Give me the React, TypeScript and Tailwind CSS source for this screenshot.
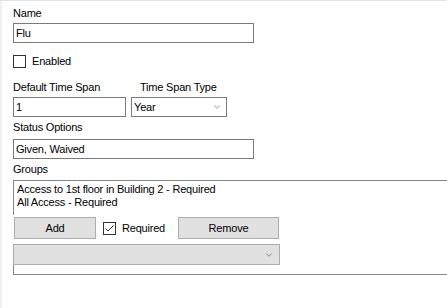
import { ChevronDown } from 'lucide-react'

const font = "font-['Liberation_Sans',Arial,sans-serif] text-[11px] leading-[13px] tracking-[-0.2px] text-black"

const groups = ['Access to 1st floor in Building 2 - Required', 'All Access - Required']

function CheckBox({ checked }: { checked?: boolean }) {
  return (
    <div className="w-[13px] h-[13px] border border-[#333333] bg-white flex items-center justify-center shrink-0">
      {checked && (
        <svg width="11" height="11" viewBox="0 0 11 11">
          <polyline points="1.5,5.5 4,8 9.5,2.5" fill="none" stroke="#333333" strokeWidth="1" />
        </svg>
      )}
    </div>
  )
}

function Chevron() {
  return <ChevronDown className="w-[10px] h-[10px] text-[#555555]" strokeWidth={1.5} />
}

export default function App() {
  return (
    <div className={`w-[447px] h-[308px] bg-white border-t border-[#e3e3e3] flex overflow-hidden ${font}`}>
      {/* left strip */}
      <div className="w-[2px] h-full bg-[#f0f0f0] shrink-0" />

      <div className="pl-[11px] flex flex-col">
        <div className="mt-[6px] h-[13px]">Name</div>
        <div className="mt-[3px] w-[241px] h-[20px] border border-[#7a7a7a] pl-[2px] flex items-center">Flu</div>

        <div className="mt-[12px] h-[13px] flex items-center gap-[6px]">
          <CheckBox />
          <span>Enabled</span>
        </div>

        <div className="mt-[13px] h-[13px] flex">
          <span className="w-[127px]">Default Time Span</span>
          <span>Time Span Type</span>
        </div>
        <div className="mt-[3px] flex gap-[5px]">
          <div className="w-[113px] h-[20px] border border-[#7a7a7a] pl-[2px] flex items-center">1</div>
          <div className="w-[96px] h-[20px] border border-[#7a7a7a] pl-[2px] pr-[4px] flex items-center justify-between">
            <span>Year</span>
            <Chevron />
          </div>
        </div>

        <div className="mt-[4px] h-[13px]">Status Options</div>
        <div className="mt-[5px] w-[241px] h-[20px] border border-[#7a7a7a] pl-[2px] flex items-center">Given, Waived</div>

        <div className="mt-[4px] h-[13px]">Groups</div>

        {/* groups box */}
        <div className="mt-[4px] w-[450px] border-t border-b border-[#828790] flex flex-col">
          <div className="h-[34px] border-l border-[#828790] pl-[3px] pt-[2px]">
            {groups.map((g) => (
              <div key={g} className="h-[13px]">{g}</div>
            ))}
          </div>

          <div className="mt-[2px] h-[22px] flex items-center">
            <button className="ml-[1px] w-[82px] h-[22px] bg-[#e1e1e1] border border-[#adadad] flex items-center justify-center">
              Add
            </button>
            <div className="w-[82px] pl-[7px] flex items-center gap-[6px]">
              <CheckBox checked />
              <span>Required</span>
            </div>
            <button className="w-[101px] h-[22px] bg-[#e1e1e1] border border-[#adadad] flex items-center justify-center">
              Remove
            </button>
          </div>

          <div className="mt-[5px] w-[267px] h-[21px] bg-[#e1e1e1] border border-[#adadad] flex items-center justify-end pr-[5px]">
            <Chevron />
          </div>

          <div className="h-[9px] border-l border-[#828790]" />
        </div>
      </div>
    </div>
  )
}
